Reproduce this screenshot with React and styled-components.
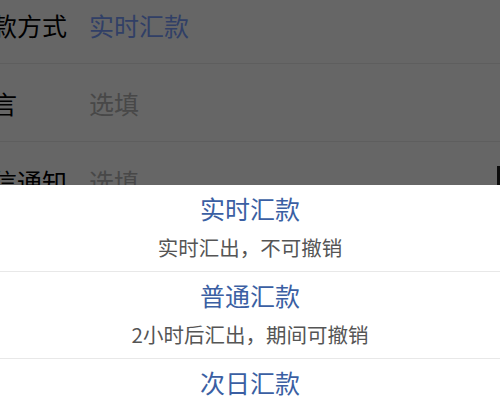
import React from "react"
import styled, { createGlobalStyle } from "styled-components"

const GlobalStyle = createGlobalStyle`
  html, body {
    margin: 0;
    padding: 0;
    background: #fff;
    overflow: hidden;
  }
  * {
    box-sizing: border-box;
  }
`

const Page = styled.div`
  position: relative;
  width: 500px;
  height: 400px;
  overflow: hidden;
  background: #fff;
  font-family: "Noto Sans CJK SC", "Noto Sans", sans-serif;
`

const Form = styled.div`
  margin-top: -14px;
`

const Row = styled.div`
  display: flex;
  align-items: center;
  height: 78px;
  border-bottom: 1px solid #ececec;
`

const Label = styled.span`
  flex: none;
  width: 122px;
  margin-left: -33px;
  font-size: 25px;
  color: #000;
  white-space: nowrap;
`

const Value = styled.span`
  font-size: 25px;
  color: ${p => (p.$placeholder ? "#b3b3b3" : "#7a9fff")};
`

const EdgeMark = styled.span`
  margin-left: auto;
  width: 3px;
  height: 30px;
  background: #222;
`

const Mask = styled.div`
  position: absolute;
  inset: 0;
  background: rgba(0, 0, 0, 0.6);
`

const Sheet = styled.div`
  position: absolute;
  top: 185px;
  left: 0;
  right: 0;
  background: #fff;
`

const Option = styled.div`
  height: 87px;
  padding-top: 8px;
  border-bottom: 1px solid #e8e8e8;
  text-align: center;
`

const OptionTitle = styled.div`
  font-size: 25px;
  line-height: 30px;
  color: #3b5fa3;
`

const OptionDesc = styled.div`
  margin-top: 11px;
  font-size: 20.5px;
  line-height: 26px;
  color: #555;
`

const rows = [
  { label: "汇款方式", value: "实时汇款" },
  { label: "留言", value: "选填", placeholder: true },
  { label: "短信通知", value: "选填", placeholder: true, mark: true },
]

const options = [
  { title: "实时汇款", desc: "实时汇出，不可撤销" },
  { title: "普通汇款", desc: "2小时后汇出，期间可撤销" },
  { title: "次日汇款", desc: "次日汇出，期间可撤销" },
]

export default function App() {
  return (
    <Page>
      <GlobalStyle />
      <Form>
        {rows.map(r => (
          <Row key={r.label}>
            <Label>{r.label}</Label>
            <Value $placeholder={r.placeholder}>{r.value}</Value>
            {r.mark && <EdgeMark />}
          </Row>
        ))}
      </Form>
      <Mask />
      <Sheet>
        {options.map(o => (
          <Option key={o.title}>
            <OptionTitle>{o.title}</OptionTitle>
            <OptionDesc>{o.desc}</OptionDesc>
          </Option>
        ))}
      </Sheet>
    </Page>
  )
}
